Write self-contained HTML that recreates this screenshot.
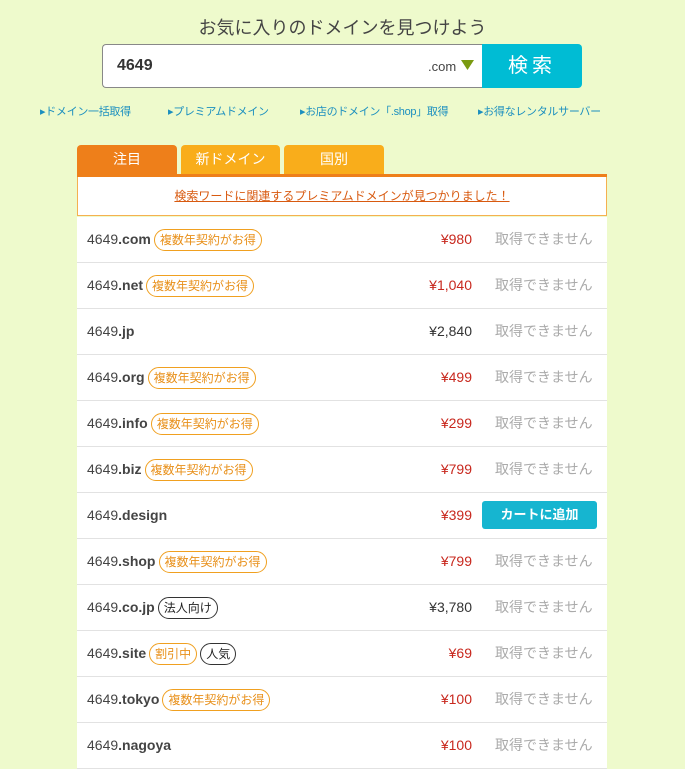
<!DOCTYPE html>
<html><head><meta charset="utf-8"><style>
body{margin:0;background:#eefacc;font-family:"Liberation Sans","Noto Sans CJK JP",sans-serif;width:685px;height:761px;overflow:hidden;position:relative;color:#333}
.abs{position:absolute}
.title{left:0;width:685px;top:14px;text-align:center;font-size:18px;color:#444}
.search{left:102px;top:44px;width:380px;height:42px;background:#fff;border:1px solid #888;border-right:none;border-radius:4px 0 0 4px}
.btn{left:482px;top:44px;width:100px;height:44px;background:#00bcd4;color:#fff;font-size:20px;text-align:center;line-height:44px;border-radius:0 4px 4px 0;letter-spacing:4px}
.links{top:103px;font-size:11px;color:#1b8fbf;letter-spacing:-0.3px}
.tab{top:145px;height:29px;line-height:29px;text-align:center;color:#fff;font-size:14px;border-radius:4px 4px 0 0;background:#f9ad1b}
.row{left:77px;width:530px;height:45px;background:#fff;border-bottom:1px solid #e2e2e2;line-height:45px}
.name{position:absolute;left:10px;top:0;height:45px;display:flex;align-items:center;font-size:14px;color:#444;white-space:nowrap}
.name b{font-weight:bold;color:#444}
.tag{display:inline-block;border:1px solid #f0a020;color:#e8901a;border-radius:11px;font-size:12px;padding:0 5px;height:20px;line-height:20px;margin-left:3px}
.tag.k{border-color:#333;color:#222}
.price{position:absolute;right:135px;top:0;font-size:14px;color:#c8281e}
.price.g{color:#333}
.st{position:absolute;left:418px;top:0;font-size:14px;color:#aaa}
.cart{position:absolute;left:405px;top:8px;width:115px;height:28px;background:#16b5d0;border-radius:3px;color:#fff;font-weight:bold;font-size:13px;text-align:center;line-height:28px}
</style></head><body>
<div class="abs title">お気に入りのドメインを見つけよう</div>
<div class="abs search"><span style="position:absolute;left:14px;top:12px;font-size:16px;font-weight:bold;color:#333">4649</span><span style="position:absolute;left:325px;top:14px;font-size:13px;color:#444">.com</span><svg style="position:absolute;left:358px;top:15px" width="13" height="10"><polygon points="0,0 13,0 6.5,10" fill="#7a9a10"/></svg></div>
<div class="abs btn">検索</div>
<div class="abs links" style="left:40px">▸ドメイン一括取得</div>
<div class="abs links" style="left:168px">▸プレミアムドメイン</div>
<div class="abs links" style="left:300px">▸お店のドメイン「.shop」取得</div>
<div class="abs links" style="left:478px">▸お得なレンタルサーバー</div>
<div class="abs tab" style="left:77px;width:100px;background:#ee7f1a">注目</div>
<div class="abs tab" style="left:181px;width:99px">新ドメイン</div>
<div class="abs tab" style="left:284px;width:100px">国別</div>
<div class="abs" style="left:77px;top:174px;width:530px;height:3px;background:#ee7f1a"></div>
<div class="abs" style="left:77px;top:177px;width:528px;height:38px;background:#fff;border:1px solid #f5b050;border-top:none;text-align:center;line-height:38px;font-size:12px;color:#d85a10"><u>検索ワードに関連するプレミアムドメインが見つかりました！</u></div>
<div class="abs row" style="top:217px"><div class="name">4649<b>.com</b><span class="tag">複数年契約がお得</span></div><div class="price">¥980</div><div class="st">取得できません</div></div>
<div class="abs row" style="top:263px"><div class="name">4649<b>.net</b><span class="tag">複数年契約がお得</span></div><div class="price">¥1,040</div><div class="st">取得できません</div></div>
<div class="abs row" style="top:309px"><div class="name">4649<b>.jp</b></div><div class="price g">¥2,840</div><div class="st">取得できません</div></div>
<div class="abs row" style="top:355px"><div class="name">4649<b>.org</b><span class="tag">複数年契約がお得</span></div><div class="price">¥499</div><div class="st">取得できません</div></div>
<div class="abs row" style="top:401px"><div class="name">4649<b>.info</b><span class="tag">複数年契約がお得</span></div><div class="price">¥299</div><div class="st">取得できません</div></div>
<div class="abs row" style="top:447px"><div class="name">4649<b>.biz</b><span class="tag">複数年契約がお得</span></div><div class="price">¥799</div><div class="st">取得できません</div></div>
<div class="abs row" style="top:493px"><div class="name">4649<b>.design</b></div><div class="price">¥399</div><div class="cart">カートに追加</div></div>
<div class="abs row" style="top:539px"><div class="name">4649<b>.shop</b><span class="tag">複数年契約がお得</span></div><div class="price">¥799</div><div class="st">取得できません</div></div>
<div class="abs row" style="top:585px"><div class="name">4649<b>.co.jp</b><span class="tag k">法人向け</span></div><div class="price g">¥3,780</div><div class="st">取得できません</div></div>
<div class="abs row" style="top:631px"><div class="name">4649<b>.site</b><span class="tag">割引中</span><span class="tag k">人気</span></div><div class="price">¥69</div><div class="st">取得できません</div></div>
<div class="abs row" style="top:677px"><div class="name">4649<b>.tokyo</b><span class="tag">複数年契約がお得</span></div><div class="price">¥100</div><div class="st">取得できません</div></div>
<div class="abs row" style="top:723px"><div class="name">4649<b>.nagoya</b></div><div class="price">¥100</div><div class="st">取得できません</div></div>
</body></html>
